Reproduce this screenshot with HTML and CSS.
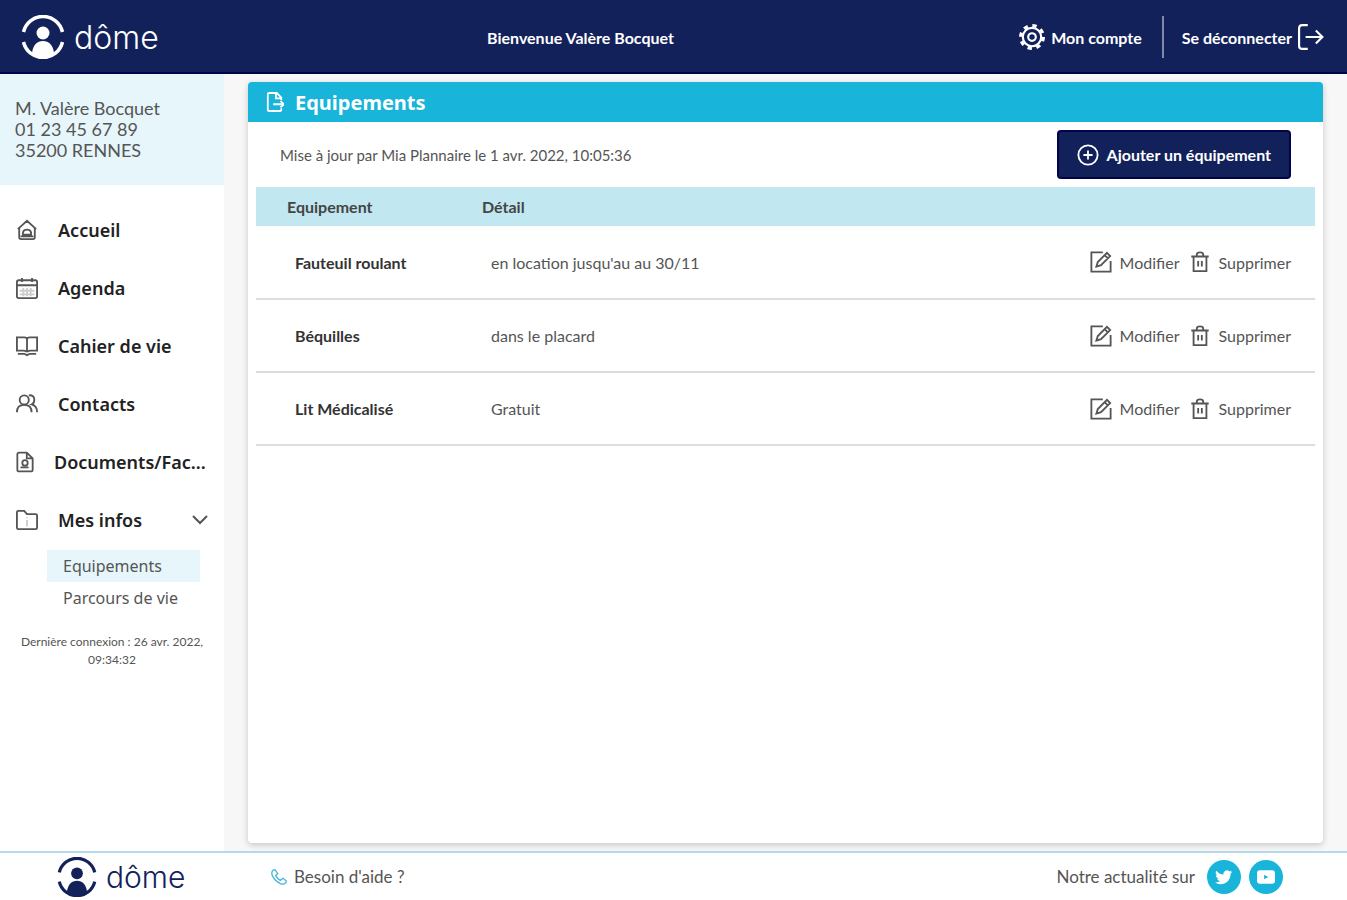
FILE: index.html
```html
<!DOCTYPE html>
<html lang="fr">
<head>
  <meta charset="UTF-8" />
  <meta name="viewport" content="width=device-width, initial-scale=1.0"/>
  <title>dôme - Equipements</title>
  <link rel="stylesheet" href="styles.css">
</head>
<body>
  <!-- shared icons -->
  <svg class="sprite" aria-hidden="true">
    <symbol id="logo" viewBox="0 0 44 44">
      <path d="M2.500 17A20 20 0 0 1 41.500 17" fill="none" stroke="currentColor" stroke-width="3.500"/>
      <path d="M2.500 27A20 20 0 0 0 41.500 27" fill="none" stroke="currentColor" stroke-width="3.500"/>
      <circle cx="22" cy="18" r="6.500" fill="currentColor"/>
      <path d="M11 38C12 30 16 26 22 26S32 30 33 38C30 44 14 44 11 38z" fill="currentColor"/>
    </symbol>
    <symbol id="edit" viewBox="0 0 24 24">
      <path d="M14 1.500H1.500V22.500H22.500V11M7 17L8.500 12L18.500 2L22 5.500L12 15.500zM16 4.500L19.500 8"/>
    </symbol>
    <symbol id="trash" viewBox="0 0 24 24">
      <path d="M2.500 6H21.500M8.500 6V4Q8.500 1.500 12 1.500T15.500 4V6M5 6V22H19V6M10 11V17M14 11V17"/>
    </symbol>
  </svg>

  <header class="topbar">
    <a class="logo" href="#"><svg class="logo-mark"><use href="#logo"/></svg>dôme</a>
    <p class="welcome">Bienvenue Valère Bocquet</p>
    <nav class="top-links">
      <a href="#">
        <svg class="icon-lg" viewBox="0 0 24 24"><circle cx="12" cy="12" r="8.500"/><circle cx="12" cy="12" r="3.500"/><circle class="cogs" cx="12" cy="12" r="10.500"/></svg>
        Mon compte
      </a>
      <a class="logout" href="#">
        Se déconnecter
        <svg class="icon-lg" viewBox="0 0 24 24"><path d="M9 1H4Q1 1 1 4V20Q1 23 4 23H9M7 12H22M16.500 6L22.500 12L16.500 18"/></svg>
      </a>
    </nav>
  </header>

  <div class="layout">
    <aside class="sidebar">
      <address class="person">M. Valère Bocquet<br>01 23 45 67 89<br>35200 RENNES</address>
      <nav class="menu">
        <a href="#"><svg class="icon" viewBox="0 0 24 24"><path d="M2 11L12 2L22 11M3.500 10V20Q3.500 22 5.500 22H18.500Q20.500 22 20.500 20V10M7.500 17V15Q8 11.500 12 11.500T16.500 15V17zM5 19H19"/></svg><span>Accueil</span></a>
        <a href="#"><svg class="icon" viewBox="0 0 24 24"><rect x="1" y="3.500" width="22" height="19.500" rx="2"/><path d="M1 9H23M6.500 1V5.500M17.500 1V5.500"/><path class="faint" d="M8 12V21M12 12V21M16 12V21M4 15H20M4 19H20"/></svg><span>Agenda</span></a>
        <a href="#"><svg class="icon" viewBox="0 0 24 24"><path d="M1 2.500H9Q12 2.500 12 5Q12 2.500 15 2.500H23V17H15L12 18L9 17H1zM12 5V17M2 20.500H9L12 22L15 20.500H22"/></svg><span>Cahier de vie</span></a>
        <a href="#"><svg class="icon" viewBox="0 0 24 24"><circle cx="9" cy="7.500" r="5"/><path d="M1 21Q1 13 9 13T17 21M14 2.500Q20 2 20 7.500Q20 11 17 12.500Q23 14 23 21"/></svg><span>Contacts</span></a>
        <a href="#"><svg class="icon-sm" viewBox="0 0 20 24"><path d="M12 1.500H3.500Q1.500 1.500 1.500 3.500V20.500Q1.500 22.500 3.500 22.500H16.500Q18.500 22.500 18.500 20.500V8zM12 1.500V8H18.500M5 18H14"/><circle cx="10" cy="13" r="3"/></svg><span>Documents/Fac...</span></a>
        <a href="#"><svg class="icon" viewBox="0 0 24 24"><path d="M1 3.500Q1 2 2.500 2H9L12 5.500H21.500Q23 5.500 23 7V20.500Q23 22 21.500 22H2.500Q1 22 1 20.500z"/><path class="faint" d="M12 12V19M12 9V10"/></svg><span>Mes infos</span><svg class="chevron" viewBox="0 0 16 10"><path d="M1 1L8 8L15 1"/></svg></a>
        <div class="submenu">
          <a class="active" href="#">Equipements</a>
          <a href="#">Parcours de vie</a>
        </div>
      </nav>
      <p class="last-login">Dernière connexion : 26 avr. 2022, 09:34:32</p>
    </aside>

    <main class="content">
      <section class="panel">
        <h1 class="panel-title"><svg class="icon-sm" viewBox="0 0 20 24"><path d="M17 10V7L12 2H3.500Q2 2 2 3.500V20.500Q2 22 3.500 22H15.500Q17 22 17 20V19M11 2V8H17M8 14.500H19M16 11L20 14.500L16 18"/></svg>Equipements</h1>
        <div class="panel-tools">
          <p>Mise à jour par Mia Plannaire le 1 avr. 2022, 10:05:36</p>
          <button class="add" type="button"><svg class="icon" viewBox="0 0 24 24"><circle cx="12" cy="12" r="10.500"/><path d="M12 7V17M7 12H17"/></svg>Ajouter un équipement</button>
        </div>
        <table class="equipment">
          <thead>
            <tr><th class="name">Equipement</th><th>Détail</th><td></td></tr>
          </thead>
          <tbody>
            <tr>
              <th scope="row">Fauteuil roulant</th>
              <td>en location jusqu'au au 30/11</td>
              <td><div class="actions">
                <button type="button"><svg class="icon"><use href="#edit"/></svg>Modifier</button>
                <button type="button"><svg class="icon"><use href="#trash"/></svg>Supprimer</button>
              </div></td>
            </tr>
            <tr>
              <th scope="row">Béquilles</th>
              <td>dans le placard</td>
              <td><div class="actions">
                <button type="button"><svg class="icon"><use href="#edit"/></svg>Modifier</button>
                <button type="button"><svg class="icon"><use href="#trash"/></svg>Supprimer</button>
              </div></td>
            </tr>
            <tr>
              <th scope="row">Lit Médicalisé</th>
              <td>Gratuit</td>
              <td><div class="actions">
                <button type="button"><svg class="icon"><use href="#edit"/></svg>Modifier</button>
                <button type="button"><svg class="icon"><use href="#trash"/></svg>Supprimer</button>
              </div></td>
            </tr>
          </tbody>
        </table>
      </section>
    </main>
  </div>

  <footer class="footer">
    <a class="logo" href="#"><svg class="logo-mark"><use href="#logo"/></svg>dôme</a>
    <a class="help" href="#"><svg class="icon-phone" viewBox="0 0 24 24"><path d="M3 2Q0 5 2 10Q6 18 14 22Q19 24 22 21L23 18L18 14L14 17Q9 14 7 10L10 7L6 1z"/></svg>Besoin d'aide ?</a>
    <div class="social">
      <span>Notre actualité sur</span>
      <a href="#" aria-label="Twitter"><svg viewBox="0 0 24 24"><path d="M23 5Q21.500 6 20.300 6Q21.800 5 22.200 3.300Q20.800 4.200 19.200 4.500A4.700 4.700 0 0 0 11.300 8.700Q5.500 8.500 1.700 3.800Q-.3 7.500 3 10Q2 10 1 9.500Q1 13 4.700 14.100Q3.700 14.400 2.700 14.200Q3.700 17.200 7 17.400Q4 19.700 0 19.300Q3.500 21.500 7.500 21.500C16.500 21.500 21 14 20.800 7.500Q22.200 6.500 23 5z"/></svg></a>
      <a href="#" aria-label="YouTube"><svg viewBox="0 0 24 24"><path fill-rule="evenodd" d="M4 3H20Q24 3 24 7V17Q24 21 20 21H4Q0 21 0 17V7Q0 3 4 3zM9.500 9V15L15 12z"/></svg></a>
    </div>
  </footer>
</body>
</html>
```
FILE: styles.css
```css
* {
  box-sizing: border-box;
}
body {
  margin: 0;
  min-height: 100vh;
  display: flex;
  flex-direction: column;
  font-family: Lato, 'Liberation Sans', sans-serif;
  font-size: 16px;
  color: #555;
  background-color: #f7f7f7;
}
a {
  color: inherit;
  text-decoration: none;
}
p {
  margin: 0;
}
button {
  font: inherit;
  color: inherit;
  background: none;
  border: none;
  padding: 0;
  cursor: pointer;
}
svg {
  flex: none;
  fill: none;
  stroke: currentColor;
  stroke-width: 2;
}
.sprite {
  display: none;
}
.icon {
  width: 22px;
  height: 22px;
}
.icon-sm {
  width: 18px;
  height: 22px;
}
.icon-lg {
  width: 26px;
  height: 26px;
}
.faint {
  opacity: 0.3;
}
.cogs {
  stroke-width: 3;
  stroke-dasharray: 4 4.250;
}

/* header */
.topbar {
  display: grid;
  grid-template-columns: 1fr auto 1fr;
  align-items: center;
  height: 74px;
  padding: 2px 23px 0 21px;
  background-color: #13215b;
  border-bottom: 2px solid #03034b;
  color: white;
  font-weight: bold;
}
.logo {
  display: flex;
  align-items: center;
  gap: 9px;
  font-family: Inter, sans-serif;
  font-size: 32px;
  font-weight: 300;
}
.logo-mark {
  width: 44px;
  height: 44px;
  stroke: none;
}
.welcome {
  padding-right: 184px;
}
.top-links {
  display: flex;
  justify-content: flex-end;
}
.top-links a {
  display: flex;
  align-items: center;
  gap: 6px;
  height: 42px;
}
.top-links .logout {
  margin-left: 20px;
  padding-left: 18px;
  border-left: 2px solid #8188a8;
}

/* sidebar */
.layout {
  flex: 1;
  display: flex;
}
.sidebar {
  width: 224px;
  flex: none;
  background-color: white;
}
.person {
  padding: 24px 15px;
  height: 111px;
  font-size: 18px;
  font-style: normal;
  line-height: 21px;
  background-color: #e6f6fb;
}
.menu {
  padding-top: 16px;
  font-family: 'Noto Sans', sans-serif;
}
.menu > a {
  display: flex;
  align-items: center;
  gap: 20px;
  height: 58px;
  padding: 0 16px;
  font-size: 18px;
  font-weight: 600;
  color: #222;
}
.menu svg {
  color: #555;
}
.menu .chevron {
  width: 16px;
  height: 10px;
  margin-left: auto;
}
.submenu {
  padding: 1px 24px 0 47px;
}
.submenu a {
  display: block;
  padding-left: 16px;
  line-height: 32px;
}
.submenu .active {
  background-color: #e6f6fb;
}
.last-login {
  padding: 19px 16px;
  font-size: 12px;
  line-height: 18px;
  text-align: center;
}

/* equipment panel */
.content {
  flex: 1;
  display: flex;
  padding: 8px 24px 8px;
}
.panel {
  flex: 1;
  background-color: white;
  border-radius: 4px;
  box-shadow: 0 2px 6px rgba(0, 0, 0, 0.2);
}
.panel-title {
  display: flex;
  align-items: center;
  gap: 11px;
  height: 40px;
  margin: 0;
  padding: 0 18px;
  font-family: 'Noto Sans', sans-serif;
  font-size: 20px;
  color: white;
  background-color: #18b4d9;
  border-radius: 4px 4px 0 0;
}
.panel-tools {
  display: flex;
  align-items: center;
  justify-content: space-between;
  padding: 8px 32px;
}
.panel-tools p {
  font-size: 15px;
}
.add {
  display: flex;
  align-items: center;
  gap: 8px;
  height: 49px;
  padding: 0 18px;
  font-weight: bold;
  color: white;
  background-color: #13215b;
  border: 2px solid #03034b;
  border-radius: 4px;
}
.equipment {
  width: calc(100% - 16px);
  margin: 0 8px;
  border-collapse: collapse;
  text-align: left;
}
.equipment thead {
  height: 39px;
  background-color: #c1e7f0;
}
.equipment .name {
  width: 195px;
}
.equipment thead th {
  padding: 0 31px;
  color: #444;
}
.equipment tbody tr {
  height: 73px;
  border-bottom: 2px solid #ddd;
}
.equipment tbody th {
  padding: 0 0 0 39px;
  white-space: nowrap;
  color: #333;
}
.equipment tbody td {
  padding: 0 0 0 40px;
}
.actions {
  display: flex;
  justify-content: flex-end;
  gap: 9px;
  padding-right: 24px;
}
.actions button {
  display: flex;
  align-items: center;
  gap: 8px;
}

/* footer */
.footer {
  display: flex;
  align-items: center;
  height: 49px;
  padding: 0 64px 0 57px;
  font-size: 17px;
  background-color: white;
  border-top: 2px solid #b4d9e8;
}
.footer .logo {
  width: 214px;
  font-size: 30px;
  color: #13215b;
}
.footer .logo-mark {
  width: 40px;
  height: 40px;
}
.help {
  display: flex;
  align-items: center;
  gap: 7px;
}
.icon-phone {
  width: 16px;
  height: 16px;
  color: #49b8dc;
}
.social {
  display: flex;
  align-items: center;
  gap: 8px;
  margin-left: auto;
}
.social span {
  padding-right: 4px;
}
.social a {
  display: flex;
  align-items: center;
  justify-content: center;
  width: 34px;
  height: 34px;
  border-radius: 50%;
  color: white;
  background-color: #18b4d9;
}
.social svg {
  width: 18px;
  height: 18px;
  fill: currentColor;
  stroke: none;
}
```
